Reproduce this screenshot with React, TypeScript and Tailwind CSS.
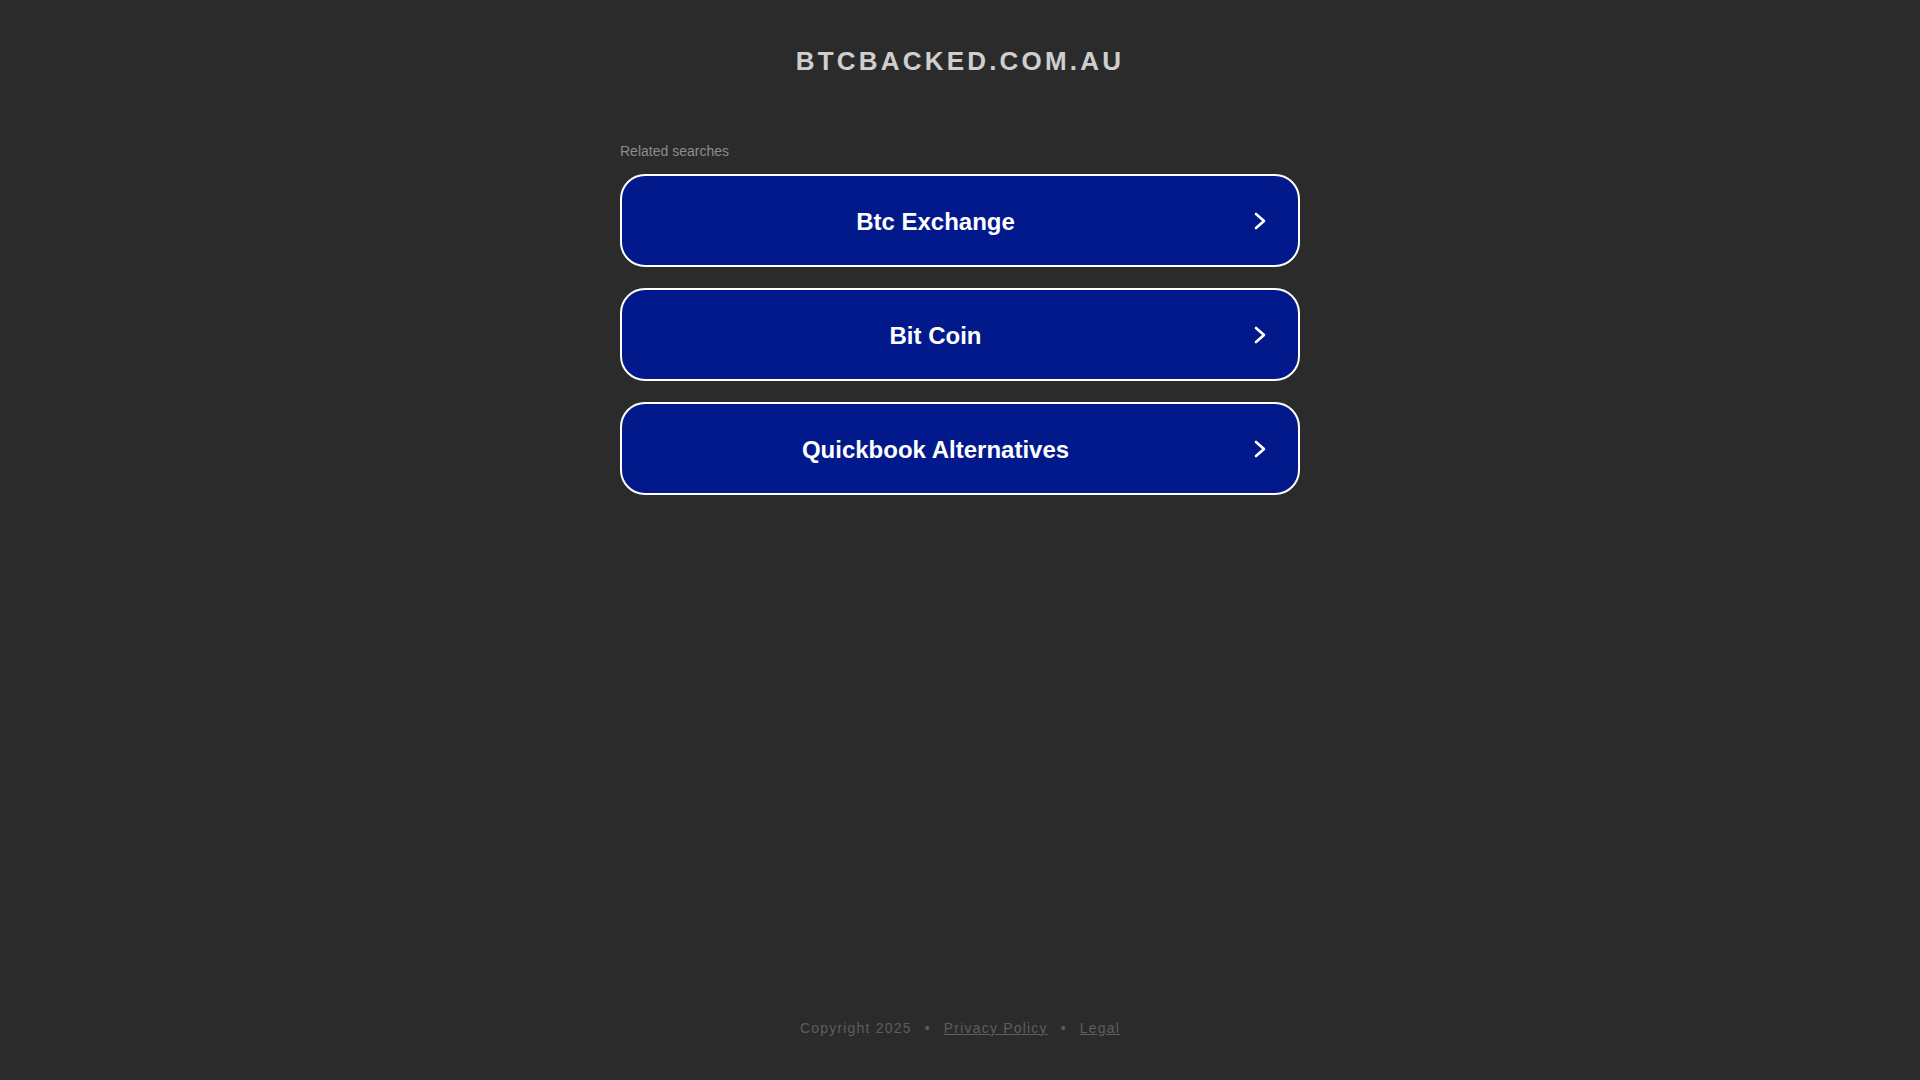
const searches = ['Btc Exchange', 'Bit Coin', 'Quickbook Alternatives'];

function Chevron() {
  return (
    <svg width="12" height="18" viewBox="0 0 12 18" fill="none" className="shrink-0">
      <path d="M2 2 L10 9 L2 16" stroke="#ffffff" strokeWidth="2.6" strokeLinecap="round" strokeLinejoin="round" />
    </svg>
  );
}

export default function App() {
  return (
    <div
      className="min-h-screen bg-[#2b2b2b] flex flex-col"
      style={{ fontFamily: '"Liberation Sans", Arial, sans-serif' }}
    >
      {/* Header */}
      <div className="pt-[46px] text-center">
        <h1 className="text-[26px] leading-[31px] font-bold tracking-[3.2px] text-[#cfcfcf]">
          BTCBACKED.COM.AU
        </h1>
      </div>

      {/* Related searches */}
      <div className="w-[680px] mx-auto mt-[66px]">
        <p className="text-[14px] leading-[16px] text-[#8c8c8c] mb-[15px]">Related searches</p>
        <div className="flex flex-col gap-[21px]">
          {searches.map((s) => (
            <a
              key={s}
              href="#"
              className="h-[93px] flex items-center bg-[#02198b] border-2 border-white rounded-[25px] text-white"
            >
              <span className="flex-1 text-center text-[24px] leading-[28px] font-bold pt-[2px]">{s}</span>
              <span className="ml-[5px] mr-[32px] flex items-center">
                <Chevron />
              </span>
            </a>
          ))}
        </div>
      </div>

      {/* Footer */}
      <div className="mt-auto pb-[44px] flex justify-center items-center text-[14px] leading-[16px] tracking-[1.2px] text-[#5e5e5e]">
        <span>Copyright 2025</span>
        <span className="px-[13px]">•</span>
        <a href="#" className="underline">Privacy Policy</a>
        <span className="px-[13px]">•</span>
        <a href="#" className="underline">Legal</a>
      </div>
    </div>
  );
}
